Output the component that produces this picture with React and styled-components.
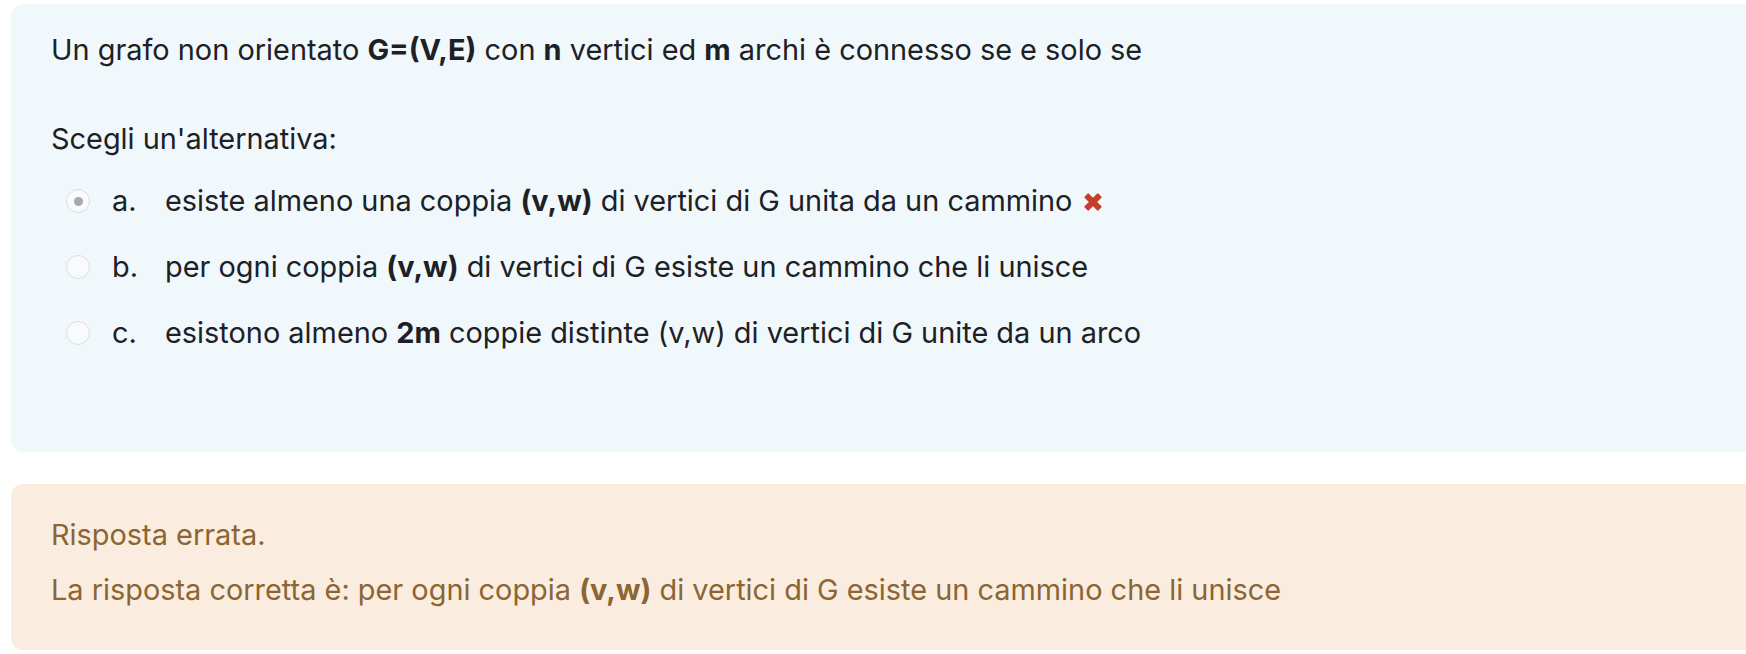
import React from "react";
import styled, { createGlobalStyle } from "styled-components";

const Global = createGlobalStyle`
  html, body { margin: 0; padding: 0; background: #ffffff; overflow: hidden; }
  body { font-family: Inter, "Noto Sans", "Liberation Sans", sans-serif; color: #1d2125; }
`;

const Page = styled.div`
  padding: 4px 0 0 11px;
  display: flex;
  flex-direction: column;
  gap: 32px;
`;

const Panel = styled.section`
  margin-right: -24px;
  border-radius: 12px;
  background: ${(p) => p.$bg};
  color: ${(p) => p.$fg};
  padding: ${(p) => p.$pad};
  font-size: 28.9px;
  line-height: 42px;
  display: flex;
  flex-direction: column;
`;

const Para = styled.div`
  margin: 0;
`;

const Prompt = styled.div`
  margin-top: 47px;
`;

const Options = styled.div`
  margin-top: 8px;
  display: flex;
  flex-direction: column;
`;

const Option = styled.div`
  height: 66px;
  display: flex;
  align-items: center;
`;

const Radio = styled.span`
  width: 24px;
  height: 24px;
  box-sizing: border-box;
  border-radius: 50%;
  border: 1px solid #d9dde1;
  background: #f8fafb;
  margin-left: 15px;
  display: flex;
  align-items: center;
  justify-content: center;
  &::after {
    content: "";
    width: 9px;
    height: 9px;
    border-radius: 50%;
    background: ${(p) => (p.$checked ? "#a6aaae" : "transparent")};
  }
`;

const Letter = styled.span`
  margin-left: 22px;
  width: 53px;
`;

const Answer = styled.span`
  display: inline-flex;
  align-items: center;
  gap: 10px;
`;

const Cross = styled.svg`
  width: 22px;
  height: 22px;
  flex: none;
  margin-top: 2px;
`;

const Outcome = styled.div`
  margin-top: ${(p) => p.$mt || 0}px;
`;

const Wrong = () => (
  <Cross viewBox="0 0 22 22">
    <path
      d="M3 6.2 L6.2 3 L11 7.8 L15.8 3 L19 6.2 L14.2 11 L19 15.8 L15.8 19 L11 14.2 L6.2 19 L3 15.8 L7.8 11 Z"
      fill="#c43f2b"
      strokeLinejoin="round"
      stroke="#c43f2b"
      strokeWidth="1.4"
    />
  </Cross>
);

export default function App() {
  return (
    <>
      <Global />
      <Page>
        <Panel $bg="#f0f8fb" $fg="#1d2125" $pad="25px 40px 86px 40px">
          <Para>
            Un grafo non orientato <b>G=(V,E)</b> con <b>n</b> vertici ed <b>m</b> archi è connesso se e solo se
          </Para>
          <Prompt>Scegli un'alternativa:</Prompt>
          <Options>
            <Option>
              <Radio $checked />
              <Letter>a.</Letter>
              <Answer>
                <span>
                  esiste almeno una coppia <b>(v,w)</b> di vertici di G unita da un cammino
                </span>
                <Wrong />
              </Answer>
            </Option>
            <Option>
              <Radio />
              <Letter>b.</Letter>
              <Answer>
                <span>
                  per ogni coppia <b>(v,w)</b> di vertici di G esiste un cammino che li unisce
                </span>
              </Answer>
            </Option>
            <Option>
              <Radio />
              <Letter>c.</Letter>
              <Answer>
                <span>
                  esistono almeno <b>2m</b> coppie distinte (v,w) di vertici di G unite da un arco
                </span>
              </Answer>
            </Option>
          </Options>
        </Panel>
        <Panel $bg="#faeddf" $fg="#8b6533" $pad="30px 40px 39px 40px">
          <Outcome>Risposta errata.</Outcome>
          <Outcome $mt={13}>
            La risposta corretta è: per ogni coppia <b>(v,w)</b> di vertici di G esiste un cammino che li unisce
          </Outcome>
        </Panel>
      </Page>
    </>
  );
}
